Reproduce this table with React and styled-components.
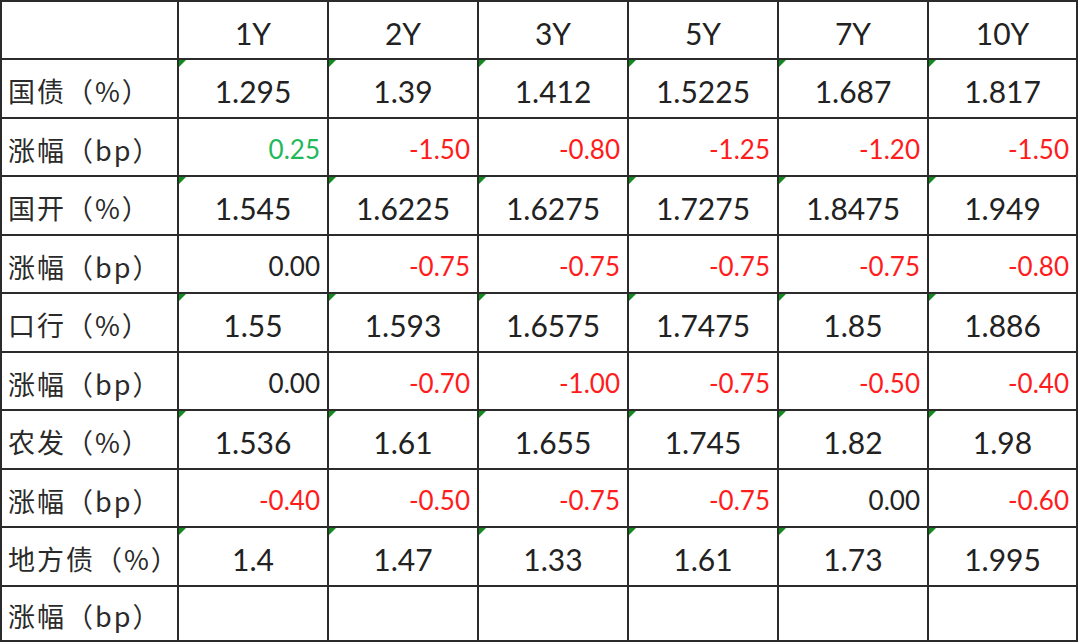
import React from 'react';
import styled, { createGlobalStyle } from 'styled-components';

const GlobalStyle = createGlobalStyle`
   html, body {
      margin: 0;
      padding: 0;
      background: #ffffff;
   }
`;

const years = ['1Y', '2Y', '3Y', '5Y', '7Y', '10Y'];

const rows = [
   { label: '国债（%）', kind: 'rate', values: ['1.295', '1.39', '1.412', '1.5225', '1.687', '1.817'] },
   { label: '涨幅（bp）', kind: 'bp', values: ['0.25', '-1.50', '-0.80', '-1.25', '-1.20', '-1.50'] },
   { label: '国开（%）', kind: 'rate', values: ['1.545', '1.6225', '1.6275', '1.7275', '1.8475', '1.949'] },
   { label: '涨幅（bp）', kind: 'bp', values: ['0.00', '-0.75', '-0.75', '-0.75', '-0.75', '-0.80'] },
   { label: '口行（%）', kind: 'rate', values: ['1.55', '1.593', '1.6575', '1.7475', '1.85', '1.886'] },
   { label: '涨幅（bp）', kind: 'bp', values: ['0.00', '-0.70', '-1.00', '-0.75', '-0.50', '-0.40'] },
   { label: '农发（%）', kind: 'rate', values: ['1.536', '1.61', '1.655', '1.745', '1.82', '1.98'] },
   { label: '涨幅（bp）', kind: 'bp', values: ['-0.40', '-0.50', '-0.75', '-0.75', '0.00', '-0.60'] },
   { label: '地方债（%）', kind: 'rate', values: ['1.4', '1.47', '1.33', '1.61', '1.73', '1.995'] },
   { label: '涨幅（bp）', kind: 'bp', values: ['', '', '', '', '', ''] },
];

// sign decides colour of a bp change
const toneOf = (v) => {
   const n = parseFloat(v);
   if (Number.isNaN(n) || n === 0) return 'flat';
   return n > 0 ? 'up' : 'down';
};

const tones = {
   flat: '#222222',
   up: '#1fb85a',
   down: '#ff1c1c',
};

const App = () => {
   return (
      <>
         <GlobalStyle />
         <Sheet>
            <Corner />
            {years.map((y) => (
               <HeadCell key={y}>{y}</HeadCell>
            ))}
            {rows.map((row, r) => (
               <React.Fragment key={r}>
                  <LabelCell $last={r === rows.length - 1}>{row.label}</LabelCell>
                  {row.values.map((v, c) =>
                     row.kind === 'rate' ? (
                        <RateCell key={c} $last={r === rows.length - 1}>
                           {v}
                        </RateCell>
                     ) : (
                        <BpCell key={c} $tone={toneOf(v)} $last={r === rows.length - 1}>
                           {v}
                        </BpCell>
                     )
                  )}
               </React.Fragment>
            ))}
         </Sheet>
      </>
   );
};

const Sheet = styled.div`
   display: grid;
   grid-template-columns: 177px repeat(5, 150px) 149px;
   grid-template-rows: 58px repeat(9, 58.5px) 55px;
   width: 1078px;
   box-sizing: border-box;
   border-left: 2px solid #2b2b2b;
   border-top: 2px solid #2b2b2b;
   background: #ffffff;
   color: #222222;
`;

const Cell = styled.div`
   position: relative;
   box-sizing: border-box;
   display: flex;
   align-items: center;
   padding-top: 5px;
   border-right: 2px solid #2b2b2b;
   border-bottom: 2px solid #2b2b2b;
   white-space: nowrap;
   overflow: hidden;
`;

const Corner = styled(Cell)``;

const HeadCell = styled(Cell)`
   justify-content: center;
   font-family: Lato, 'Liberation Sans', sans-serif;
   font-size: 30px;
`;

const LabelCell = styled(Cell)`
   padding-left: 6px;
   font-family: 'Noto Sans CJK SC', 'Noto Sans', sans-serif;
   font-size: 27px;
   letter-spacing: 2px;
   color: #2a2a2a;
`;

const RateCell = styled(Cell)`
   justify-content: center;
   font-family: Lato, 'Liberation Sans', sans-serif;
   font-size: 30px;

   /* excel "number stored as text" flag */
   &::before {
      content: '';
      position: absolute;
      top: 0;
      left: 0;
      width: 0;
      height: 0;
      border-top: 7px solid #138a1e;
      border-right: 7px solid transparent;
   }
`;

const BpCell = styled(Cell)`
   justify-content: flex-end;
   padding-right: 7px;
   font-family: Lato, 'Liberation Sans', sans-serif;
   font-size: 26px;
   color: ${(p) => tones[p.$tone]};
`;

export default App;
